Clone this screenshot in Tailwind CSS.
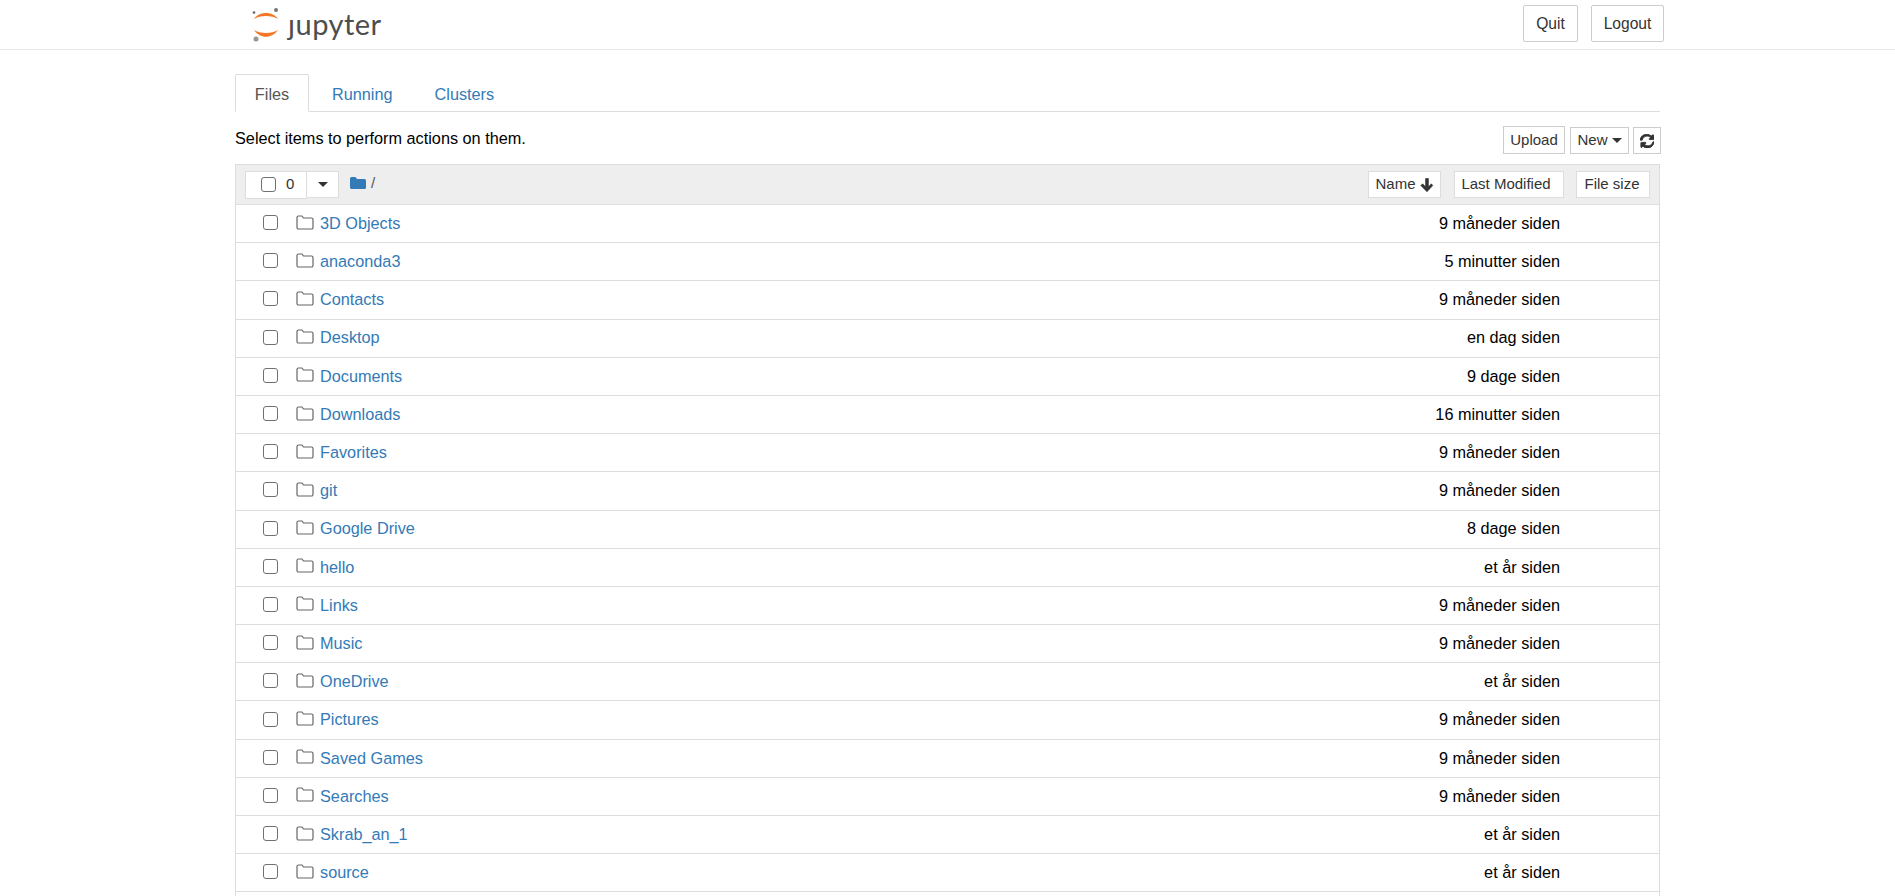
<!DOCTYPE html>
<html lang="en">
<head>
  <meta charset="UTF-8" />
  <title>Home</title>
  <script src="https://cdn.jsdelivr.net/npm/@tailwindcss/browser@4"></script>
</head>
<body class="bg-white text-black h-[896px] overflow-hidden font-['Liberation_Sans',Arial,sans-serif] text-[16.25px]">
  <!-- Header -->
  <div class="h-[50px] border-b border-[#e7e7e7] pl-[235px] flex items-start">
    <div class="w-[1429px] flex justify-between items-start">
      <div class="flex items-center h-[48px] pl-[16px]">
        <svg width="30" height="36" viewBox="0 0 30 36" class="mr-[7px]">
          <path d="M3 13 C8 5 22 5 27 13 C21 9 9 9 3 13 Z" fill="#f37726" />
          <path d="M3 24 C9 33 21 33 27 24 C21 28 9 28 3 24 Z" fill="#f37726" />
          <circle cx="25" cy="4" r="2" fill="#767677" />
          <circle cx="3" cy="6.500" r="1.300" fill="#616262" />
          <circle cx="5" cy="33" r="2.500" fill="#989798" />
        </svg>
        <span class="font-['Lato',sans-serif] text-[29px] leading-none text-[#4e4e4e] tracking-[0.5px] -mt-[2px]">ȷupyter</span>
      </div>
      <div class="flex gap-[13px] pt-[5px] text-[15.6px]">
        <button class="h-[37px] w-[55px] border border-[#ccc] rounded-[2px] text-[#333] pt-[1px]">Quit</button>
        <button class="h-[37px] w-[73px] border border-[#ccc] rounded-[2px] text-[#333] pt-[1px]">Logout</button>
      </div>
    </div>
  </div>

  <div class="w-[1425px] ml-[235px]">
    <!-- Tabs -->
    <div class="mt-[24px] h-[38px] border-b border-[#ddd] flex">
      <div class="h-[38px] w-[74px] bg-white border border-[#ddd] border-b-white rounded-t-[2px] flex items-center justify-center text-[#555] pt-[3px]">Files</div>
      <a class="h-[37px] ml-[2px] px-[21px] flex items-center text-[#337ab7] pt-[3px]">Running</a>
      <a class="h-[37px] px-[21px] flex items-center text-[#337ab7] pt-[3px]">Clusters</a>
    </div>

    <!-- Toolbar -->
    <div class="flex justify-between items-start h-[52px] pt-[14px] w-[1426px]">
      <p class="leading-[20px] mt-[2px]">Select items to perform actions on them.</p>
      <div class="flex">
        <button class="h-[28px] w-[62px] border border-[#ccc] text-[#333] text-[15px]">Upload</button>
        <button class="h-[27px] mt-[1px] ml-[5px] w-[59px] border border-[#ccc] text-[#333] text-[15px] flex items-center justify-center gap-[4px]">New <span class="w-0 h-0 border-x-[5px] border-x-transparent border-t-[5px] border-t-[#333]"></span></button>
        <button class="h-[27px] mt-[1px] ml-[4px] w-[28px] border border-[#ccc] flex items-center justify-center">
          <svg width="14" height="14" viewBox="0 0 24 24" fill="#333" stroke="#333" stroke-width="1.500"><path d="M23 14.500c0 .1 0 .2-.1.3C21.600 20.300 17.200 24 11.800 24 8.900 24 6.200 22.900 4 21l-2 2c-.3.300-.6.300-1 .1-.3-.1-.5-.4-.5-.8v-7c0-.5.400-.9.900-.9h7c.4 0 .7.200.8.500.2.400.1.700-.2 1l-2.100 2.200c1.500 1.400 3.500 2.200 5.700 2.200 3 0 5.700-1.500 7.200-4 .3-.5.900-2 1.100-2.600.1-.2.300-.3.500-.3h3c.300 0 .6.300.6.600zM23.400 1.600v7c0 .5-.4.900-.9.900h-7c-.4 0-.7-.2-.8-.5-.2-.4-.1-.7.200-1l2.100-2.200C15.500 4.400 13.500 3.600 11.300 3.600c-3 0-5.700 1.500-7.200 4-.3.5-.9 2-1.100 2.600-.1.200-.3.300-.5.300H-.5c-.3 0-.5-.3-.5-.6v-.2C.4 4.200 4.800.5 10.200.5c2.900 0 5.800 1.100 8 3.100l2-2c.3-.3.600-.3 1-.1.300.1.500.4.500.8z" transform="translate(1 0)"/></svg>
        </button>
      </div>
    </div>

    <!-- File list -->
    <div class="border-x border-t border-[#ddd]">
      <div class="h-[40px] bg-[#eee] border-b border-[#ddd] flex items-center pl-[9px] pr-[9px]">
        <div class="h-[28px] w-[62px] bg-white border border-[#ddd] flex items-center pl-[15px] gap-[10px] text-[#333] text-[15px]">
          <span class="block w-[15px] h-[15px] border border-[#707070] rounded-[3px] bg-white"></span>0
        </div>
        <div class="h-[27px] w-[32px] bg-white border border-l-0 border-[#ddd] flex items-center justify-center">
          <span class="w-0 h-0 border-x-[5px] border-x-transparent border-t-[5px] border-t-[#333]"></span>
        </div>
        <svg width="16" height="14" viewBox="0 0 16 14" class="ml-[11px] -mt-[3px]"><path d="M1.500 1h4l1.500 2h7.500a1.500 1.500 0 0 1 1.500 1.500v7a1.500 1.500 0 0 1-1.500 1.500h-13A1.500 1.500 0 0 1 0 11.500v-9A1.500 1.500 0 0 1 1.500 1z" fill="#337ab7"/></svg>
        <span class="ml-[5px] text-[#555] text-[15px] -mt-[2px]">/</span>
        <div class="ml-auto flex text-[#333] text-[15px]">
          <button class="h-[27px] w-[73px] bg-white border border-[#ddd] flex items-center justify-center gap-[4px]">Name
            <svg width="14" height="14" viewBox="0 0 13 13" fill="#333" stroke="#333" stroke-width=".6"><path d="M6.500 12.800 .8 7l1.600-1.600 2.800 2.800V.5h2.600v7.700l2.800-2.800L11.800 7z"/></svg>
          </button>
          <button class="h-[27px] w-[110px] ml-[13px] pr-[6px] bg-white border border-[#ddd]">Last Modified</button>
          <button class="h-[27px] w-[74px] ml-[12px] pr-[2px] bg-white border border-[#ddd]">File size</button>
        </div>
      </div>

      <div id="rows"></div>
    </div>
  </div>

  <script>
    const files = [
      ["3D Objects", "9 måneder siden"],
      ["anaconda3", "5 minutter siden"],
      ["Contacts", "9 måneder siden"],
      ["Desktop", "en dag siden"],
      ["Documents", "9 dage siden"],
      ["Downloads", "16 minutter siden"],
      ["Favorites", "9 måneder siden"],
      ["git", "9 måneder siden"],
      ["Google Drive", "8 dage siden"],
      ["hello", "et år siden"],
      ["Links", "9 måneder siden"],
      ["Music", "9 måneder siden"],
      ["OneDrive", "et år siden"],
      ["Pictures", "9 måneder siden"],
      ["Saved Games", "9 måneder siden"],
      ["Searches", "9 måneder siden"],
      ["Skrab_an_1", "et år siden"],
      ["source", "et år siden"],
    ];
    const rows = document.getElementById('rows');
    files.forEach(([name, modified]) => {
      rows.innerHTML += `
        <div class="h-[38.2px] border-b border-[#ddd] flex items-center pl-[27px] pr-[99px] pb-[1px]">
          <span class="block w-[15px] h-[15px] border border-[#707070] rounded-[3px] -mt-[1px]"></span>
          <svg width="18" height="15" viewBox="0 0 18 15" fill="none" stroke="#666" stroke-width="1.200" class="ml-[18px] -mt-[2px]"><path d="M2.500 1h3.500l1.500 2h8a1.500 1.500 0 0 1 1.500 1.500v8a1.500 1.500 0 0 1-1.500 1.500h-13A1.500 1.500 0 0 1 1 12.500v-10A1.500 1.500 0 0 1 2.500 1z"/></svg>
          <a class="ml-[6px] text-[#337ab7]">${name}</a>
          <span class="ml-auto">${modified}</span>
        </div>`;
    });
    rows.innerHTML += `<div class="h-[38.2px]"></div>`;
  </script>
</body>
</html>
